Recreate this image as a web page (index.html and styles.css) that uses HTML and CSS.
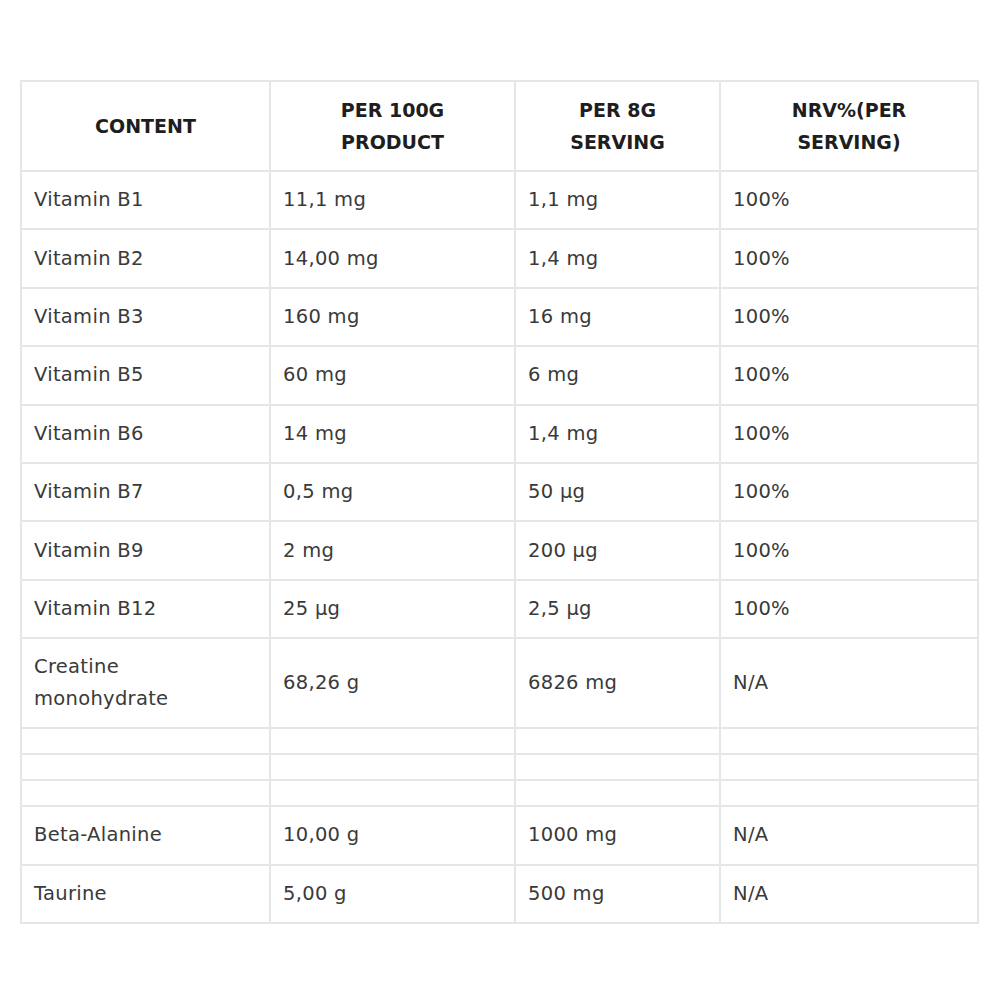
FILE: index.html
```html
<!DOCTYPE html>
<html>
<head>
<meta charset="utf-8">
<link rel="stylesheet" href="styles.css">
</head>
<body>
<div class="page">
<table class="nutri">
  <colgroup>
    <col class="c1"><col class="c2"><col class="c3"><col class="c4">
  </colgroup>
  <thead>
    <tr class="head">
      <th>CONTENT</th>
      <th>PER 100G<br>PRODUCT</th>
      <th>PER 8G<br>SERVING</th>
      <th>NRV%(PER<br>SERVING)</th>
    </tr>
  </thead>
  <tbody>
    <tr><td>Vitamin B1</td><td>11,1 mg</td><td>1,1 mg</td><td>100%</td></tr>
    <tr><td>Vitamin B2</td><td>14,00 mg</td><td>1,4 mg</td><td>100%</td></tr>
    <tr><td>Vitamin B3</td><td>160 mg</td><td>16 mg</td><td>100%</td></tr>
    <tr><td>Vitamin B5</td><td>60 mg</td><td>6 mg</td><td>100%</td></tr>
    <tr><td>Vitamin B6</td><td>14 mg</td><td>1,4 mg</td><td>100%</td></tr>
    <tr><td>Vitamin B7</td><td>0,5 mg</td><td>50 µg</td><td>100%</td></tr>
    <tr><td>Vitamin B9</td><td>2 mg</td><td>200 µg</td><td>100%</td></tr>
    <tr><td>Vitamin B12</td><td>25 µg</td><td>2,5 µg</td><td>100%</td></tr>
    <tr class="tall"><td>Creatine<br>monohydrate</td><td>68,26 g</td><td>6826 mg</td><td>N/A</td></tr>
    <tr class="empty"><td></td><td></td><td></td><td></td></tr>
    <tr class="empty"><td></td><td></td><td></td><td></td></tr>
    <tr class="empty"><td></td><td></td><td></td><td></td></tr>
    <tr><td>Beta-Alanine</td><td>10,00 g</td><td>1000 mg</td><td>N/A</td></tr>
    <tr><td>Taurine</td><td>5,00 g</td><td>500 mg</td><td>N/A</td></tr>
  </tbody>
</table>
</div>
</body>
</html>
```
FILE: styles.css
```css
html, body {
  margin: 0;
  padding: 0;
  background: #ffffff;
}
.page {
  padding: 80px 0 0 20px;
}
.nutri {
  border-collapse: collapse;
  table-layout: fixed;
  width: 957px;
  font-family: "DejaVu Sans", sans-serif;
  font-size: 19.5px;
  color: #3a3a3a;
  letter-spacing: 0.3px;
}
.c1 { width: 249px; }
.c2 { width: 245px; }
.c3 { width: 205px; }
.c4 { width: 258px; }
.nutri th,
.nutri td {
  border: 2px solid #e6e6e6;
  padding: 0 12px;
  line-height: 32px;
  vertical-align: middle;
  text-align: left;
}
.nutri th {
  font-weight: bold;
  font-size: 19px;
  letter-spacing: 0;
  color: #1e1e1e;
  text-align: center;
  height: 88px;
}
.nutri td {
  height: 56.4px;
}
.nutri tr.tall td {
  height: 88px;
}
.nutri tr.empty td {
  height: 24px;
}
```
